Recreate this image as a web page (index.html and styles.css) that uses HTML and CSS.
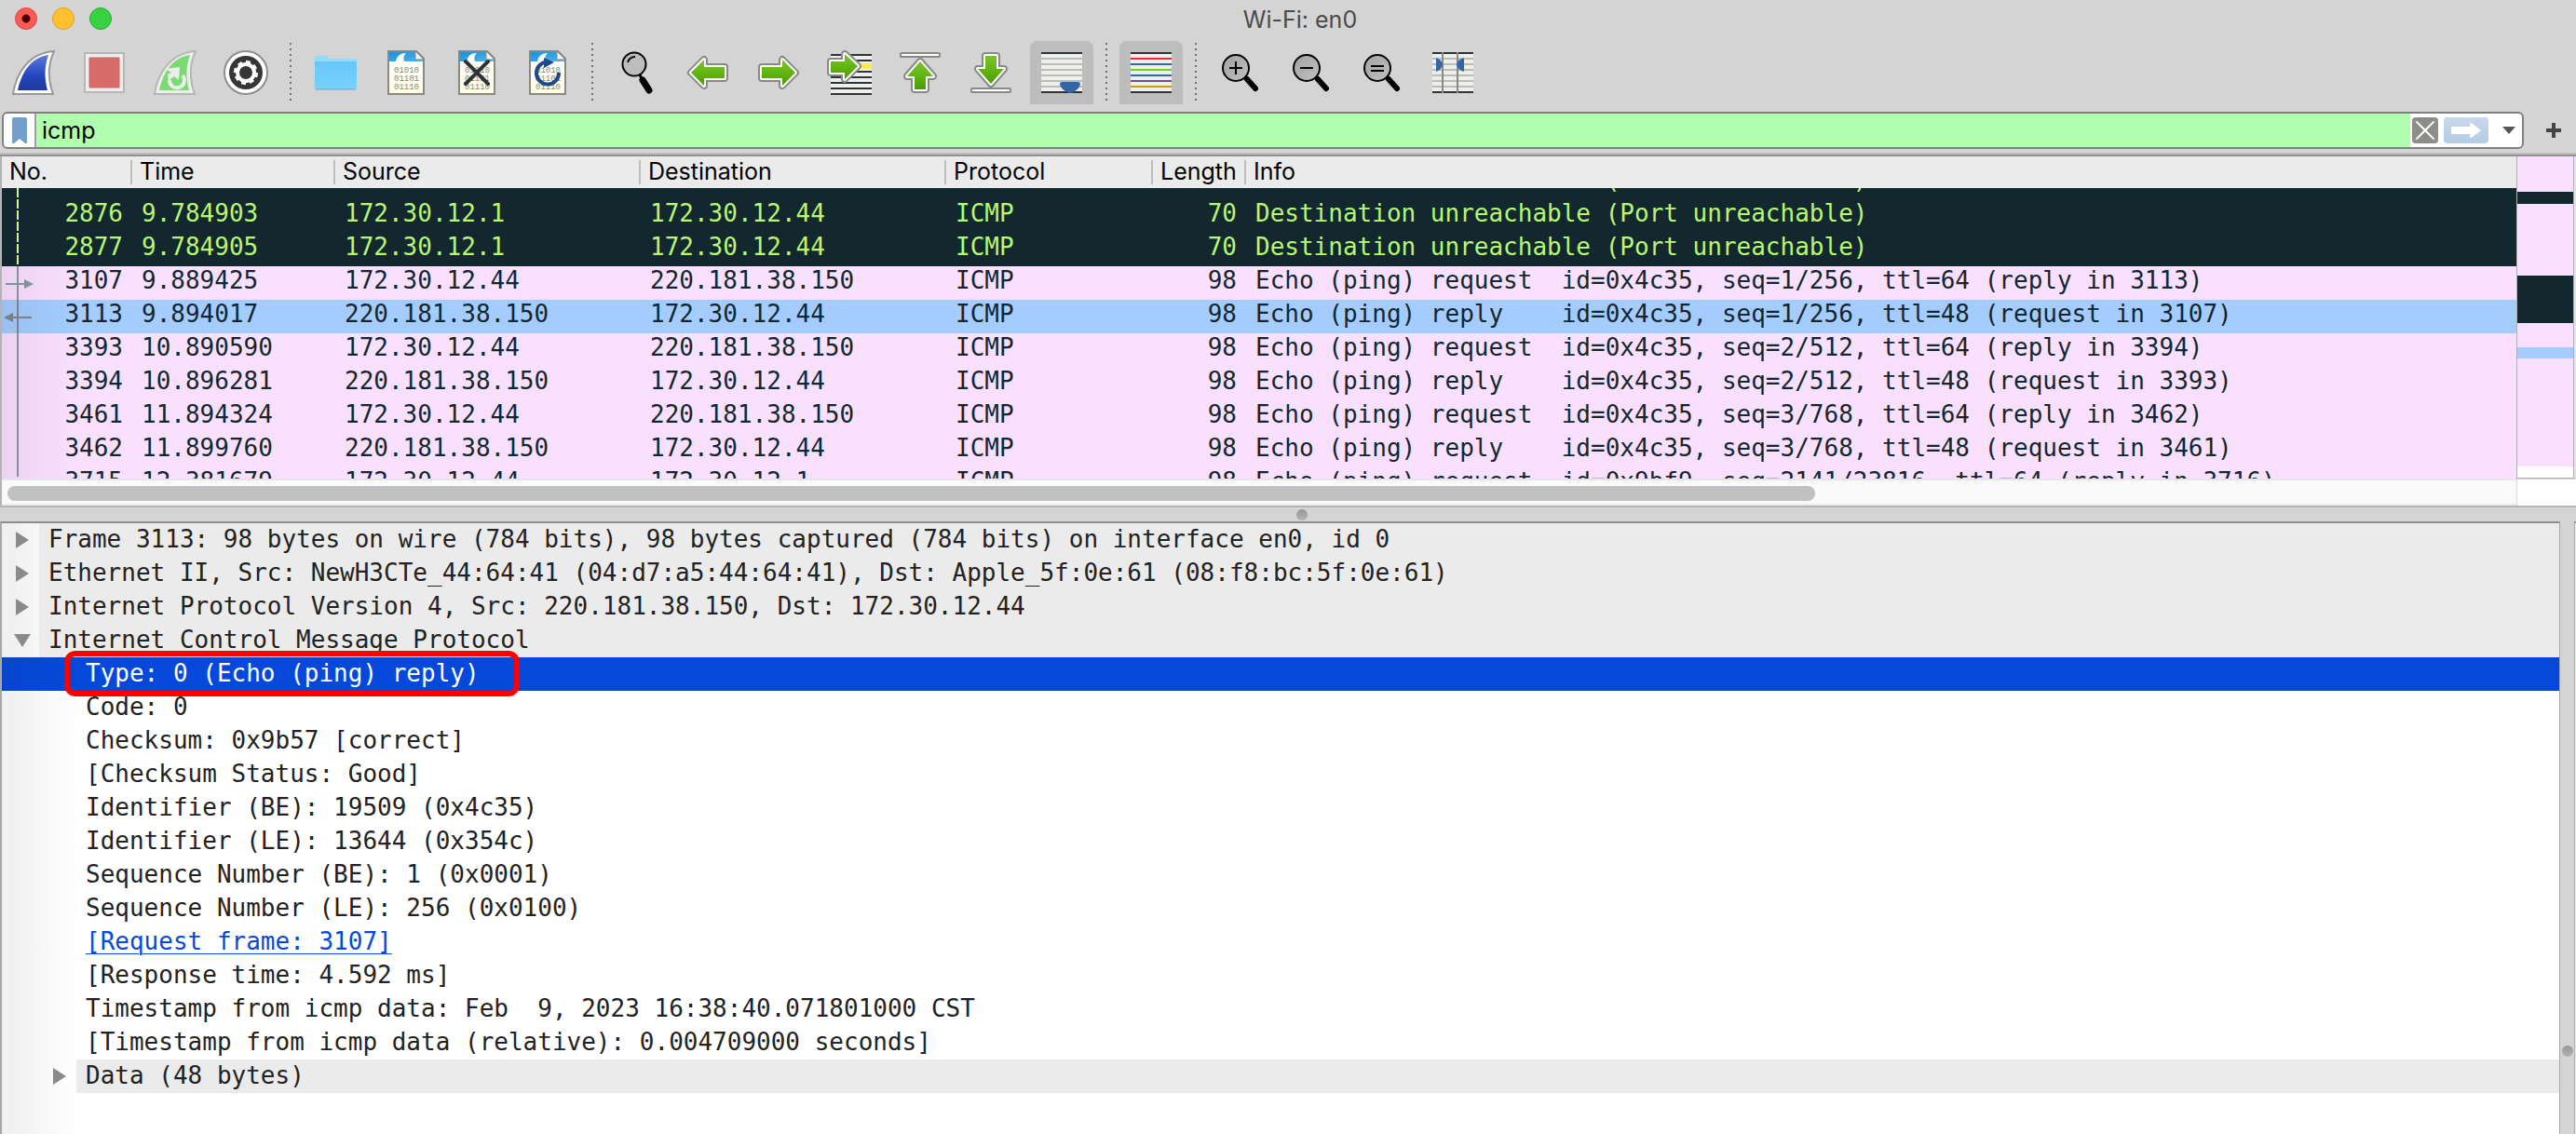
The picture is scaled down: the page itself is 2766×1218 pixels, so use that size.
FILE: index.html
```html
<!DOCTYPE html>
<html lang="en">
<head>
<meta charset="utf-8">
<title>Wi-Fi: en0</title>
<link rel="stylesheet" href="styles.css">
</head>
<body>
<svg class="defs" aria-hidden="true">
  <defs>
    <linearGradient id="g-blue" x1="0" y1="0" x2="0" y2="1"><stop offset="0" stop-color="#5b7ce0"/><stop offset=".6" stop-color="#2444bb"/><stop offset="1" stop-color="#1f3a9c"/></linearGradient>
    <linearGradient id="g-green" x1="0" y1="0" x2="0" y2="1"><stop offset="0" stop-color="#7cc231"/><stop offset=".5" stop-color="#62b512"/><stop offset="1" stop-color="#4e9a06"/></linearGradient>
    <linearGradient id="g-sky" x1="0" y1="0" x2="1" y2="1"><stop offset="0" stop-color="#1b8fd6"/><stop offset="1" stop-color="#4fb6ea"/></linearGradient>
    <linearGradient id="g-paper" x1="0" y1="0" x2="0" y2="1"><stop offset="0" stop-color="#fff"/><stop offset="1" stop-color="#fffde2"/></linearGradient>
    <linearGradient id="g-folder" x1="0" y1="0" x2="0" y2="1"><stop offset="0" stop-color="#68c6f8"/><stop offset="1" stop-color="#78d1fb"/></linearGradient>
    <linearGradient id="g-lens" x1="0" y1="0" x2="1" y2="1"><stop offset="0" stop-color="#a2a2a2"/><stop offset="1" stop-color="#c0c0c0"/></linearGradient>
    <symbol id="sheet" viewBox="0 0 48 48">
      <path d="M5 1H35L43 9V47H5Z" fill="url(#g-paper)" stroke="#888a85" stroke-width="2"/>
      <path d="M6 2H34V10H42V12H6Z" fill="url(#g-sky)"/>
      <path d="M13 12C14 7 17 3 24 3C21 6 21 9 22 12Z" fill="#fff"/>
      <path d="M34 1V10H43Z" fill="#f4f4f0" stroke="#888a85"/>
      <g class="bits"><text x="11" y="24">01010</text><text x="11" y="33">01101</text><text x="11" y="42">01110</text></g>
    </symbol>
    <symbol id="sheet-rows" viewBox="0 0 48 48">
      <path d="M2 2H46V46H2Z" fill="#eeeeec"/>
      <path d="M2 9H46M2 15H46M2 21H46M2 27H46M2 33H46M2 39H46" stroke="#babdb6" stroke-width="2"/>
      <path d="M2 3H46M2 45H46" stroke="#2e3436" stroke-width="2"/>
    </symbol>
    <symbol id="zoom-lens" viewBox="0 0 48 48">
      <path d="M31 31L40 41" stroke="#000" stroke-width="6" stroke-linecap="round"/>
      <circle cx="19" cy="19" r="14" fill="url(#g-lens)" stroke="#000" stroke-width="2"/>
    </symbol>
  </defs>
</svg>

<header class="titlebar">
  <div class="lights">
    <button class="light light-close" aria-label="Close"></button>
    <button class="light light-min" aria-label="Minimize"></button>
    <button class="light light-max" aria-label="Zoom window"></button>
  </div>
  <h1 class="title">Wi-Fi: en0</h1>
</header>

<nav class="toolbar" aria-label="Main toolbar">
  <button class="tool" aria-label="Start capture"><svg viewBox="0 0 48 48"><path d="M2 47C5 26 18 3 46 1C39 16 40 33 45 47Z" fill="#fff" stroke="#999" stroke-width="2"/><path d="M7 43C11 25 20 8 40 5C35 18 36 32 39 43Z" fill="url(#g-blue)"/></svg></button>
  <button class="tool" aria-label="Stop capture"><svg viewBox="0 0 48 48"><path d="M3 3H45V45H3Z" fill="#ededed" stroke="#b6b6b6" stroke-width="2"/><path d="M8 8H40V40H8Z" fill="#d96b6b" stroke="#cc6868"/></svg></button>
  <button class="tool" aria-label="Restart capture"><svg viewBox="0 0 48 48"><path d="M2 47C5 26 18 3 46 1C39 16 40 33 45 47Z" fill="#ededed" stroke="#b6b6b6" stroke-width="2"/><path d="M7 43C11 25 20 8 40 5C35 18 36 32 39 43Z" fill="#7adb70"/><path d="M18 32A8 8 0 1 0 32 27" fill="none" stroke="#ededed" stroke-width="4"/><path d="M14 20L29 18L28 32L23 28L17 33L16 26L20 24Z" fill="#ededed"/></svg></button>
  <button class="tool" aria-label="Capture options"><svg viewBox="0 0 48 48"><circle cx="24" cy="24" r="23" fill="#fff" stroke="#8e8e8e" stroke-width="2"/><circle cx="24" cy="24" r="18" fill="#363636"/><circle cx="24" cy="24" r="9" fill="none" stroke="#fff" stroke-width="4"/><path d="M24 11V15M24 33V37M11 24H15M33 24H37M15 15L18 18M30 30L33 33M15 33L18 30M30 18L33 15" stroke="#fff" stroke-width="5" transform="rotate(12 24 24)"/></svg></button>
  <span class="sep"></span>
  <button class="tool" aria-label="Open file"><svg viewBox="0 0 48 48"><path d="M2 41V8Q2 6 4 6H14L18 9H45Q47 9 47 11V41Z" fill="#8edbfd"/><path d="M2 12H47V40Q47 42 45 42H4Q2 42 2 40Z" fill="url(#g-folder)"/><path d="M3 42H46" stroke="#5aaedb"/></svg></button>
  <button class="tool" aria-label="Save file"><svg viewBox="0 0 48 48"><use href="#sheet"/></svg></button>
  <button class="tool" aria-label="Close file"><svg viewBox="0 0 48 48"><use href="#sheet"/><path d="M12 12L36 36M36 12L12 36" stroke="#2e3436" stroke-width="4" stroke-linecap="round"/></svg></button>
  <button class="tool" aria-label="Reload file"><svg viewBox="0 0 48 48"><use href="#sheet"/><path d="M23 12.500A12 12 0 1 0 36 24" fill="none" stroke="#204a87" stroke-width="4"/><path d="M20 8L31 13L20 19Z" fill="#204a87"/></svg></button>
  <span class="sep"></span>
  <button class="tool" aria-label="Find packet"><svg viewBox="0 0 48 48"><path d="M27 26L30 33" stroke="#000" stroke-width="3"/><path d="M30 32L37 43" stroke="#000" stroke-width="7" stroke-linecap="round"/><circle cx="21" cy="15" r="12.500" fill="#bdbdbd" stroke="#000" stroke-width="2"/><path d="M14 13Q16 7 22 7" fill="none" stroke="#000" stroke-width="2"/></svg></button>
  <button class="tool" aria-label="Previous packet"><svg viewBox="0 0 48 48"><path class="arrow-edge" d="M6 24L20 10V18H42V30H20V38Z"/><path class="arrow" d="M6 24L20 10V18H42V30H20V38Z"/></svg></button>
  <button class="tool" aria-label="Next packet"><svg viewBox="0 0 48 48"><path class="arrow-edge" d="M42 24L28 10V18H6V30H28V38Z"/><path class="arrow" d="M42 24L28 10V18H6V30H28V38Z"/></svg></button>
  <button class="tool" aria-label="Go to packet"><svg viewBox="0 0 48 48"><path d="M4 4H48V48H4Z" fill="#eeeeec"/><path d="M4 5H48M4 11H48M4 23H48M4 29H48M4 35H48M4 41H48M4 47H48" stroke="#2e3436" stroke-width="2"/><path d="M34 14H48V20H34Z" fill="#fce94f"/><path class="arrow-edge" d="M33 17L19 4V12H4V24H19V31Z"/><path class="arrow" d="M33 17L19 4V12H4V24H19V31Z"/></svg></button>
  <button class="tool" aria-label="First packet"><svg viewBox="0 0 48 48"><rect x="3" y="3" width="42" height="4" rx="1" fill="#fff" stroke="#888a85" stroke-width="2"/><path class="arrow-edge" d="M24 12L38 28H30V42H18V28H10Z"/><path class="arrow" d="M24 12L38 28H30V42H18V28H10Z"/></svg></button>
  <button class="tool" aria-label="Last packet"><svg viewBox="0 0 48 48"><path class="arrow-edge" d="M24 36L38 20H30V6H18V20H10Z"/><path class="arrow" d="M24 36L38 20H30V6H18V20H10Z"/><rect x="3" y="41" width="42" height="4" rx="1" fill="#fff" stroke="#888a85" stroke-width="2"/></svg></button>
  <button class="tool tool-on" aria-label="Auto scroll" aria-pressed="true"><svg viewBox="0 0 48 48"><use href="#sheet-rows"/><path d="M22 36Q22 34 25 34H41Q44 34 44 36Q43 42 36 45Q33 47 30 45Q23 42 22 36Z" fill="#3465a4"/></svg></button>
  <span class="sep"></span>
  <button class="tool tool-on" aria-label="Colorize packets" aria-pressed="true"><svg viewBox="0 0 48 48"><use href="#sheet-rows"/><g stroke-width="2"><path d="M2 9H46" stroke="#ef2929"/><path d="M2 15H46" stroke="#3465a4"/><path d="M2 21H46" stroke="#73d216"/><path d="M2 27H46" stroke="#3465a4"/><path d="M2 33H46" stroke="#75507b"/><path d="M2 39H46" stroke="#c4a000"/></g></svg></button>
  <span class="sep"></span>
  <button class="tool" aria-label="Zoom in"><svg viewBox="0 0 48 48"><use href="#zoom-lens"/><path d="M12 19H26M19 12V26" stroke="#000" stroke-width="2"/></svg></button>
  <button class="tool" aria-label="Zoom out"><svg viewBox="0 0 48 48"><use href="#zoom-lens"/><path d="M12 19H26" stroke="#000" stroke-width="2"/></svg></button>
  <button class="tool" aria-label="Normal size"><svg viewBox="0 0 48 48"><use href="#zoom-lens"/><path d="M12 17H26M12 22H26" stroke="#000" stroke-width="2"/></svg></button>
  <button class="tool" aria-label="Resize columns"><svg viewBox="0 0 48 48"><use href="#sheet-rows"/><path d="M13 2V46M29 2V46" stroke="#888a85" stroke-width="2"/><path d="M6 8Q12 10 13 15Q12 21 6 23ZM36 8Q29 10 28 15Q29 21 36 23Z" fill="#3465a4"/></svg></button>
</nav>

<form class="filterbar" onsubmit="return false">
  <div class="filter">
    <button class="bookmark" type="button" aria-label="Bookmarks"><svg viewBox="0 0 16 28" width="16" height="28"><path d="M0 2Q0 0 2 0H14Q16 0 16 2V28H14L8 23L2 28H0Z" fill="#729fcf"/></svg></button>
    <input class="filter-input" type="text" value="icmp" aria-label="Display filter">
    <button class="clear" type="button" aria-label="Clear filter"><svg viewBox="0 0 28 28" width="28" height="28"><path d="M5 5L23 23M23 5L5 23" stroke="#fff" stroke-width="2" stroke-linecap="round"/></svg></button>
    <button class="apply" type="submit" aria-label="Apply filter"><svg viewBox="0 0 48 28" width="48" height="28"><path d="M9 10H28V7Q29 5 31 7L40 14L31 21Q29 23 28 21V18H9Q8 18 8 17V11Q8 10 9 10Z" fill="#fff"/></svg></button>
    <button class="caret" type="button" aria-label="Recent filters"><svg viewBox="0 0 14 8" width="14" height="8"><path d="M0 0H14L7 8Z" fill="#555753"/></svg></button>
  </div>
  <button class="add" type="button" aria-label="Add filter button"><svg viewBox="0 0 16 16" width="16" height="16"><path d="M6 0H10V6H16V10H10V16H6V10H0V6H6Z" fill="#444"/></svg></button>
</form>

<main class="panes">
  <section class="list-pane">
    <div class="list-main">
      <table class="packets">
        <thead><tr><th>No.</th><th>Time</th><th>Source</th><th>Destination</th><th>Protocol</th><th>Length</th><th>Info</th></tr></thead>
        <tbody>
          <tr class="dark"><td><svg class="rel" viewBox="0 0 40 36"><path class="dash" d="M17 0V36"/></svg>2875</td><td>9.784901</td><td>172.30.12.1</td><td>172.30.12.44</td><td>ICMP</td><td>70</td><td>Destination unreachable (Port unreachable)</td></tr>
          <tr class="dark"><td><svg class="rel" viewBox="0 0 40 36"><path class="dash" d="M17 0V36"/></svg>2876</td><td>9.784903</td><td>172.30.12.1</td><td>172.30.12.44</td><td>ICMP</td><td>70</td><td>Destination unreachable (Port unreachable)</td></tr>
          <tr class="dark"><td><svg class="rel" viewBox="0 0 40 36"><path class="dash" d="M17 0V36"/></svg>2877</td><td>9.784905</td><td>172.30.12.1</td><td>172.30.12.44</td><td>ICMP</td><td>70</td><td>Destination unreachable (Port unreachable)</td></tr>
          <tr><td><svg class="rel" viewBox="0 0 40 36"><path class="line" d="M17 0V36M4 19H26"/><path class="head" d="M24 14L34 19L24 24Z"/></svg>3107</td><td>9.889425</td><td>172.30.12.44</td><td>220.181.38.150</td><td>ICMP</td><td>98</td><td>Echo (ping) request  id=0x4c35, seq=1/256, ttl=64 (reply in 3113)</td></tr>
          <tr class="current"><td><svg class="rel" viewBox="0 0 40 36"><path class="line" d="M17 0V36M10 19H32"/><path class="head" d="M12 14L2 19L12 24Z"/></svg>3113</td><td>9.894017</td><td>220.181.38.150</td><td>172.30.12.44</td><td>ICMP</td><td>98</td><td>Echo (ping) reply    id=0x4c35, seq=1/256, ttl=48 (request in 3107)</td></tr>
          <tr><td><svg class="rel" viewBox="0 0 40 36"><path class="line" d="M17 0V36"/></svg>3393</td><td>10.890590</td><td>172.30.12.44</td><td>220.181.38.150</td><td>ICMP</td><td>98</td><td>Echo (ping) request  id=0x4c35, seq=2/512, ttl=64 (reply in 3394)</td></tr>
          <tr><td><svg class="rel" viewBox="0 0 40 36"><path class="line" d="M17 0V36"/></svg>3394</td><td>10.896281</td><td>220.181.38.150</td><td>172.30.12.44</td><td>ICMP</td><td>98</td><td>Echo (ping) reply    id=0x4c35, seq=2/512, ttl=48 (request in 3393)</td></tr>
          <tr><td><svg class="rel" viewBox="0 0 40 36"><path class="line" d="M17 0V36"/></svg>3461</td><td>11.894324</td><td>172.30.12.44</td><td>220.181.38.150</td><td>ICMP</td><td>98</td><td>Echo (ping) request  id=0x4c35, seq=3/768, ttl=64 (reply in 3462)</td></tr>
          <tr><td><svg class="rel" viewBox="0 0 40 36"><path class="line" d="M17 0V36"/></svg>3462</td><td>11.899760</td><td>220.181.38.150</td><td>172.30.12.44</td><td>ICMP</td><td>98</td><td>Echo (ping) reply    id=0x4c35, seq=3/768, ttl=48 (request in 3461)</td></tr>
          <tr><td><svg class="rel" viewBox="0 0 40 36"><path class="line" d="M17 0V10"/></svg>3715</td><td>12.381679</td><td>172.30.12.44</td><td>172.30.12.1</td><td>ICMP</td><td>98</td><td>Echo (ping) request  id=0x9bf9, seq=2141/23816, ttl=64 (reply in 3716)</td></tr>
        </tbody>
      </table>
      <div class="hscroll"><div class="hscroll-thumb" style="width:72.2%"></div></div>
    </div>
    <div class="map-side">
      <div class="minimap">
        <i class="m-pink" style="flex-grow:38"></i><i class="m-dark" style="flex-grow:13"></i><i class="m-pink" style="flex-grow:77"></i><i class="m-dark" style="flex-grow:51"></i><i class="m-pink" style="flex-grow:26"></i><i class="m-blue" style="flex-grow:12"></i><i class="m-pink" style="flex-grow:116"></i><i style="flex-grow:12"></i>
      </div>
      <div class="corner"></div>
    </div>
  </section>

  <div class="splitter"><span class="grip"></span></div>

  <section class="lower">
    <div class="tree">
      <ul class="nodes">
        <li><div class="row proto"><button class="toggle" aria-label="Expand"></button><span class="label">Frame 3113: 98 bytes on wire (784 bits), 98 bytes captured (784 bits) on interface en0, id 0</span></div></li>
        <li><div class="row proto"><button class="toggle" aria-label="Expand"></button><span class="label">Ethernet II, Src: NewH3CTe_44:64:41 (04:d7:a5:44:64:41), Dst: Apple_5f:0e:61 (08:f8:bc:5f:0e:61)</span></div></li>
        <li><div class="row proto"><button class="toggle" aria-label="Expand"></button><span class="label">Internet Protocol Version 4, Src: 220.181.38.150, Dst: 172.30.12.44</span></div></li>
        <li><div class="row proto"><button class="toggle open" aria-label="Collapse"></button><span class="label">Internet Control Message Protocol</span></div>
          <ul class="nodes children">
            <li><div class="row picked"><span class="label">Type: 0 (Echo (ping) reply)</span><span class="mark"></span></div></li>
            <li><div class="row"><span class="label">Code: 0</span></div></li>
            <li><div class="row"><span class="label">Checksum: 0x9b57 [correct]</span></div></li>
            <li><div class="row"><span class="label">[Checksum Status: Good]</span></div></li>
            <li><div class="row"><span class="label">Identifier (BE): 19509 (0x4c35)</span></div></li>
            <li><div class="row"><span class="label">Identifier (LE): 13644 (0x354c)</span></div></li>
            <li><div class="row"><span class="label">Sequence Number (BE): 1 (0x0001)</span></div></li>
            <li><div class="row"><span class="label">Sequence Number (LE): 256 (0x0100)</span></div></li>
            <li><div class="row"><span class="label"><a href="#frame-3107">[Request frame: 3107]</a></span></div></li>
            <li><div class="row"><span class="label">[Response time: 4.592 ms]</span></div></li>
            <li><div class="row"><span class="label">Timestamp from icmp data: Feb  9, 2023 16:38:40.071801000 CST</span></div></li>
            <li><div class="row"><span class="label">[Timestamp from icmp data (relative): 0.004709000 seconds]</span></div></li>
            <li><div class="row proto"><button class="toggle" aria-label="Expand"></button><span class="label">Data (48 bytes)</span></div></li>
          </ul>
        </li>
      </ul>
    </div>
    <div class="vsplitter"><span class="grip"></span></div>
    <div class="bytes"></div>
  </section>
</main>
</body>
</html>
```
FILE: styles.css
```css
* { box-sizing: border-box; }

body {
  margin: 0;
  height: 100vh;
  display: flex;
  flex-direction: column;
  overflow: hidden;
  background: #d4d4d4;
  color: #000;
  font-family: Inter, "Liberation Sans", sans-serif;
  font-size: 25px;
}

button {
  margin: 0;
  padding: 0;
  border: 0;
  background: none;
  display: flex;
  align-items: center;
  justify-content: center;
  flex: none;
}

.defs { position: absolute; width: 0; height: 0; }

/* Title bar */
.titlebar {
  display: grid;
  grid-template-columns: 1fr auto 1fr;
  align-items: center;
  height: 40px;
  flex: none;
  padding-left: 16px;
}
.lights { display: flex; gap: 16px; }
.light { width: 24px; height: 24px; border-radius: 50%; border: 1px solid; }
.light-close { background: radial-gradient(circle, #4d0000 4px, #ff5a57 5px); border-color: #e2403d; }
.light-min { background: #ffbf2f; border-color: #dfa023; }
.light-max { background: #38d144; border-color: #24ab2d; }
.title { margin: 0; padding: 2px 0 0 10px; font-size: 25px; line-height: 38px; font-weight: 400; color: #4b4b4b; }

/* Toolbar */
.toolbar {
  display: flex;
  gap: 8px;
  padding: 4px 2px 8px;
  flex: none;
}
.tool { width: 68px; height: 68px; }
.tool svg { width: 48px; height: 48px; }
.tool-on { background: #bdbdbd; border-radius: 8px 8px 0 0; }
.sep {
  width: 12px;
  margin: 2px 0 4px;
  background: repeating-linear-gradient(#707070 0 2px, transparent 2px 6px) center / 2px 100% no-repeat;
}
.bits { font: 9px "Liberation Mono", monospace; fill: #888a85; }
.arrow-edge { fill: #fff; stroke: #888a85; stroke-width: 8px; stroke-linejoin: round; }
.arrow { fill: url(#g-green); stroke: #fff; stroke-width: 4px; stroke-linejoin: round; paint-order: stroke; }

/* Display filter */
.filterbar {
  display: flex;
  height: 44px;
  padding: 0 0 4px 2px;
  flex: none;
}
.filter {
  flex: 1;
  display: flex;
  align-items: center;
  border: 2px solid #808080;
  border-radius: 6px;
  background: #fff;
  overflow: hidden;
}
.bookmark { width: 33px; height: 36px; }
.filter-input {
  flex: 1;
  min-width: 0;
  align-self: stretch;
  padding: 0 6px;
  border: 0;
  border-left: 2px solid #a0a0a0;
  border-radius: 0;
  background: #afffaf;
  color: #000;
  font: inherit;
  outline: 0;
}
.clear { width: 28px; height: 28px; margin-left: 2px; border-radius: 4px; background: #8c8e89; }
.apply { width: 48px; height: 28px; margin-left: 6px; border-radius: 4px; background: linear-gradient(#c6d8ec, #b5cce6); }
.caret { width: 28px; height: 28px; margin-left: 8px; }
.add { width: 56px; padding-left: 8px; }

/* Packet list */
.panes {
  flex: 1;
  min-height: 0;
  display: flex;
  flex-direction: column;
  border-top: 2px solid #bdbdbd;
}
.list-pane {
  display: flex;
  flex: none;
  border-top: 2px solid #909090;
  border-bottom: 2px solid #b4b4b4;
}
.list-main { flex: 1; min-width: 0; border-left: 2px solid #b4b4b4; }
.packets, .packets thead, .packets tbody { display: block; }
.packets tr {
  display: grid;
  grid-template-columns: 140px 218px 328px 328px 222px 100px 1fr;
}
/* The body is a scrolled viewport: the first and last rows show in part */
.packets tbody { height: 312px; overflow: hidden; }
.packets tbody tr:first-child { margin-top: -24px; }
.packets th {
  height: 34px;
  padding: 0 0 2px 8px;
  text-align: left;
  font-weight: 400;
  line-height: 32px;
  background: linear-gradient(#bdbdbd, #bdbdbd) right 4px / 2px 26px no-repeat #ebebeb;
}
.packets th:last-child { background: #ebebeb; }
.packets td {
  position: relative;
  height: 36px;
  padding: 0 10px 6px;
  font: 26px/30px "DejaVu Sans Mono", monospace;
  white-space: pre;
  overflow: hidden;
  background: #fae0ff;
  color: #12272e;
}
.packets td:nth-child(1), .packets td:nth-child(6) { text-align: right; }
.packets td:nth-child(1) {
  background: linear-gradient(90deg, rgba(0, 0, 0, .06), transparent 84px) #fae0ff;
}
.packets .dark td { background: #12272e; color: #b7f774; }
.packets .current td { background: #a4ccff; }
.packets .current td:nth-child(1) {
  background: linear-gradient(90deg, rgba(0, 0, 0, .06), transparent 84px) #a4ccff;
}
.rel { position: absolute; left: 0; top: 0; width: 40px; height: 36px; }
.line { fill: none; stroke: #84909a; stroke-width: 2px; }
.head { fill: #84909a; }
.current .line { stroke: #7b7f86; }
.current .head { fill: #7b7f86; }
.dash { stroke: #d5f5a0; stroke-width: 2px; stroke-dasharray: 10 2; }

.hscroll {
  height: 29px;
  padding: 6px 6px 5px;
  border-top: 2px solid #e6e6e6;
  border-bottom: 2px solid #ececec;
  background: #fafafa;
}
.hscroll-thumb { height: 16px; border-radius: 8px; background: #c1c1c1; }

.map-side { width: 64px; display: flex; flex-direction: column; background: #e6e6e6; }
.minimap {
  width: 62px;
  height: 346px;
  display: flex;
  flex-direction: column;
  border: 1px solid #b0b0b0;
  border-top: 0;
  background: #fff;
}
.minimap i { flex-basis: 0; }
.m-pink { background: #fae0ff; }
.m-dark { background: #12272e; }
.m-blue { background: #a4ccff; }
.corner { flex: 1; border-top: 1px solid #d8d8d8; border-left: 1px solid #d8d8d8; background: #fff; }

/* Splitters */
.splitter { height: 15px; flex: none; display: flex; align-items: center; justify-content: center; padding-left: 30px; }
.grip { width: 12px; height: 12px; border-radius: 50%; background: linear-gradient(#969696, #b4b4b4); }

/* Packet details */
.lower { flex: 1; min-height: 0; display: flex; }
.tree {
  flex: 1;
  min-width: 0;
  overflow: hidden;
  border: 2px solid #a8a8a8;
  border-top-color: #8e8e8e;
  border-width: 2px 1px 0 2px;
  background: linear-gradient(90deg, #efefef, #fff 84px);
}
.nodes { margin: 0; padding: 0; list-style: none; }
.row {
  position: relative;
  display: flex;
  height: 36px;
  padding-left: 40px;
  font: 26px/30px "DejaVu Sans Mono", monospace;
  color: #222;
  white-space: pre;
}
.children .row { padding-left: 80px; }
.row:has(.toggle) { padding-left: 0; }
.children .row:has(.toggle) { padding-left: 40px; }
.label { flex: 1; padding: 2px 10px 4px; }
.proto .label { background: #ebebeb; }
.picked { background: linear-gradient(90deg, #0745cc, #0649da 84px); color: #fff; }
.label a { color: #0649da; text-decoration-thickness: 1px; text-underline-offset: 4px; }
.toggle { width: 40px; height: 36px; padding-left: 4px; }
.toggle::before {
  content: "";
  width: 14px;
  height: 18px;
  background: #8a8a8a;
  clip-path: polygon(0 0, 100% 50%, 0 100%);
}
.toggle.open::before { width: 18px; height: 14px; clip-path: polygon(0 0, 100% 0, 50% 100%); }
/* Highlight ring drawn over the selected field */
.mark {
  position: absolute;
  left: 67px;
  top: -7px;
  width: 489px;
  height: 49px;
  border: 6px solid #f00;
  border-radius: 12px;
  z-index: 1;
}
.vsplitter { width: 15px; flex: none; display: flex; align-items: flex-end; justify-content: center; padding-bottom: 83px; }
.bytes { width: 2px; flex: none; border-left: 1px solid #b0b0b0; border-top: 2px solid #8e8e8e; background: #ebebeb; }
```
